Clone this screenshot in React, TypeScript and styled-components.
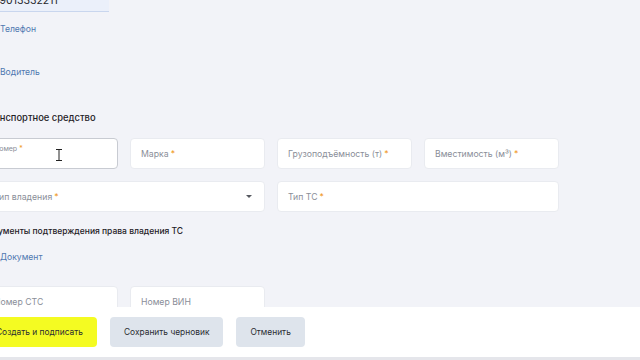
import React from "react";
import styled, { createGlobalStyle } from "styled-components";

const GlobalStyle = createGlobalStyle`
	html, body {
		margin: 0;
		padding: 0;
		background: #f2f3f8;
		font-family: Inter, "Noto Sans", "Liberation Sans", sans-serif;
		color: #26282d;
	}
`;

const Page = styled.div`
	width: 640px;
	height: 360px;
	display: flex;
	flex-direction: column;
	overflow: hidden;
	background: #f2f3f8;
`;

const Content = styled.div`
	flex: 1;
	overflow: hidden;
	min-height: 0;
`;

const Form = styled.div`
	margin: -22px 0 0 -17px;
	width: 576px;
	display: flex;
	flex-direction: column;
`;

const PhoneInput = styled.div`
	width: 126px;
	height: 34px;
	box-sizing: border-box;
	background: #ebf0fa;
	border-bottom: 1px solid #c9d6ee;
	display: flex;
	align-items: flex-end;
	padding: 0 10px 4px 4px;
	font-size: 10.5px;
	line-height: 12px;
	color: #26282d;
`;

const AddLink = styled.div<{ $top: number }>`
	margin-top: ${(p) => p.$top}px;
	height: 14px;
	display: flex;
	align-items: center;
	gap: 5px;
	font-size: 8.6px;
	color: #4f78b0;
`;

const Heading = styled.div<{ $top: number; $size: number; $shift?: number }>`
	margin-top: ${(p) => p.$top}px;
	margin-left: ${(p) => p.$shift || 0}px;
	height: 14px;
	line-height: 14px;
	font-size: ${(p) => p.$size}px;
	font-weight: 500;
	color: #1f2126;
	white-space: nowrap;
`;

const Grid = styled.div<{ $top: number }>`
	margin-top: ${(p) => p.$top}px;
	display: grid;
	grid-template-columns: repeat(4, 134.5px);
	column-gap: 12.5px;
	row-gap: 12px;
`;

const Field = styled.div<{ $span?: number; $focused?: boolean }>`
	position: relative;
	grid-column: span ${(p) => p.$span || 1};
	height: 31px;
	box-sizing: border-box;
	background: #ffffff;
	border: 1px solid ${(p) => (p.$focused ? "#c8cbd2" : "#e9ebf0")};
	border-radius: 4px;
	display: flex;
	align-items: center;
	padding: 0 10px;
	font-size: 8.7px;
	color: #8a8e98;
`;

const FloatLabel = styled.span`
	position: absolute;
	top: 5px;
	left: 10px;
	font-size: 7px;
	color: #8a8e98;
`;

const Star = styled.span`
	color: #f09a2a;
	margin-left: 2px;
`;

const Caret = styled.span`
	margin-left: auto;
	margin-right: 2px;
	width: 0;
	height: 0;
	border-left: 3px solid transparent;
	border-right: 3px solid transparent;
	border-top: 3px solid #55585f;
`;

const Cursor = styled.svg`
	position: absolute;
	left: 71px;
	top: 10px;
`;

const Footer = styled.div`
	height: 50px;
	flex-shrink: 0;
	background: #ffffff;
	border-bottom: 3px solid #e5e6eb;
	display: flex;
	align-items: center;
	gap: 13px;
	margin-left: -18px;
`;

const Button = styled.button<{ $primary?: boolean }>`
	height: 30px;
	border: none;
	border-radius: 4px;
	padding: 0 14px;
	background: ${(p) => (p.$primary ? "#f4fb22" : "#dee4ec")};
	color: #2a2c31;
	font-family: inherit;
	font-size: 8.4px;
	white-space: nowrap;
`;

const PlusIcon = () => (
	<svg width="12" height="12" viewBox="0 0 12 12">
		<path d="M6 2v8M2 6h8" stroke="#4f78b0" strokeWidth="1.3" />
	</svg>
);

function App() {
	return (
		<Page>
			<GlobalStyle />
			<Content>
				<Form>
					<PhoneInput>+79013332211</PhoneInput>
					<AddLink $top={10}>
						<PlusIcon />
						Телефон
					</AddLink>
					<AddLink $top={29}>
						<PlusIcon />
						Водитель
					</AddLink>
					<Heading $top={32} $size={9.4}>
						Транспортное средство
					</Heading>
					<Grid $top={13}>
						<Field $focused>
							<FloatLabel>
								Номер<Star>*</Star>
							</FloatLabel>
							<Cursor width="8" height="12" viewBox="0 0 8 12">
								<path d="M1 0.5h6M1 11.5h6M4 0.5v11" stroke="#222" strokeWidth="1" fill="none" />
							</Cursor>
						</Field>
						<Field>
							Марка<Star>*</Star>
						</Field>
						<Field>
							Грузоподъёмность (т)<Star>*</Star>
						</Field>
						<Field>
							Вместимость (м³)<Star>*</Star>
						</Field>
						<Field $span={2}>
							Тип владения<Star>*</Star>
							<Caret />
						</Field>
						<Field $span={2}>
							Тип ТС<Star>*</Star>
						</Field>
					</Grid>
					<Heading $top={12} $size={8.5} $shift={-2}>
						Документы подтверждения права владения ТС
					</Heading>
					<AddLink $top={12}>
						<PlusIcon />
						Документ
					</AddLink>
					<Grid $top={22}>
						<Field>Номер СТС</Field>
						<Field>Номер ВИН</Field>
					</Grid>
				</Form>
			</Content>
			<Footer>
				<Button $primary>Создать и подписать</Button>
				<Button>Сохранить черновик</Button>
				<Button>Отменить</Button>
			</Footer>
		</Page>
	);
}

export default App;
